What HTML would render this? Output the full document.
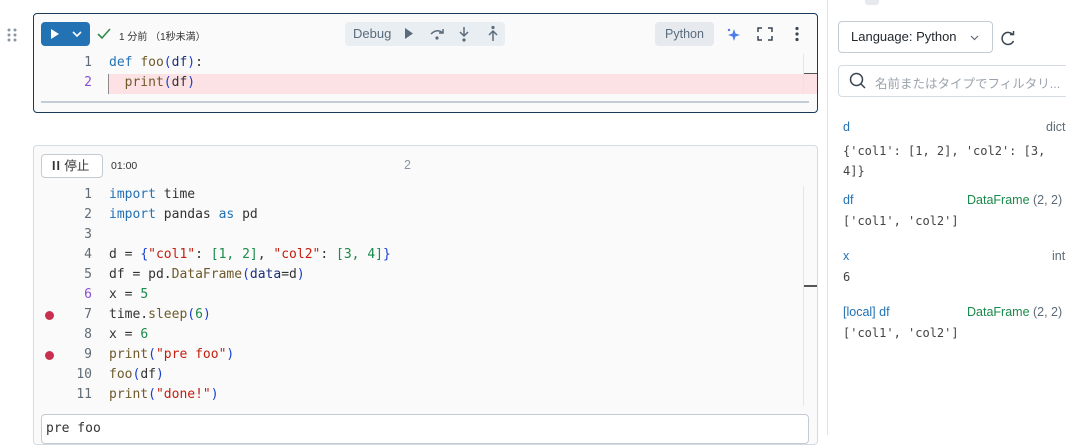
<!DOCTYPE html>
<html><head><meta charset="utf-8"><style>
*{box-sizing:border-box;margin:0;padding:0}
body{width:1066px;height:435px;overflow:hidden;background:#fff;font-family:"Liberation Sans","Noto Sans CJK JP",sans-serif;position:relative;color:#1f272d}
.a{position:absolute}
.mono{font-family:"DejaVu Sans Mono","Liberation Mono",monospace;font-size:13px}
.rm{font-family:"DejaVu Sans Mono","Liberation Mono",monospace;font-size:12px}
.ln{position:absolute;width:30px;text-align:right;left:62px;color:#5f6b76}
.cd{position:absolute;left:109px;white-space:pre;color:#333}
.k{color:#2272b4}.f{color:#6e5a2a}.b{color:#1a3fcf}.s{color:#c41d0f}.n{color:#1a8a4a}.v{color:#1b2f7a}
.dot{position:absolute;left:45px;width:9px;height:9px;border-radius:50%;background:#c9304f}
</style></head><body>
<svg class="a" style="left:7px;top:28px" width="12" height="14"><g fill="#8a96a3"><circle cx="2" cy="2" r="1.5"/><circle cx="8" cy="2" r="1.5"/><circle cx="2" cy="7" r="1.5"/><circle cx="8" cy="7" r="1.5"/><circle cx="2" cy="12" r="1.5"/><circle cx="8" cy="12" r="1.5"/></g></svg>

<div class="a" style="left:33px;top:13px;width:785px;height:100px;border:1px solid #1b3a57;border-radius:4px;background:#fafafa"></div>
<div class="a" style="left:41px;top:22px;width:49px;height:24px;background:#2272b4;border-radius:4px"></div>
<svg class="a" style="left:50px;top:29px" width="10" height="10"><path d="M1 0L9 5L1 10Z" fill="#fff"/></svg>
<svg class="a" style="left:72px;top:31px" width="10" height="6"><path d="M1 1L5 5L9 1" stroke="#fff" stroke-width="1.6" fill="none"/></svg>
<svg class="a" style="left:97px;top:28px" width="14" height="12"><path d="M1 6L5 10L13 1" stroke="#2e8b4a" stroke-width="1.6" fill="none"/></svg>
<div class="a" style="left:119px;top:28px;font-size:10px;color:#333">1 分前 （1秒未満）</div>
<div class="a" style="left:345px;top:22px;width:160px;height:24px;background:#e9eef3;border-radius:4px"></div>
<div class="a" style="left:353px;top:26px;font-size:13px;color:#5a6b7b">Debug</div>
<svg class="a" style="left:404px;top:28px" width="10" height="11"><path d="M1 0L9 5.5L1 11Z" fill="#5a6b7b"/></svg>
<svg class="a" style="left:429px;top:27px" width="16" height="14"><path d="M2 7Q8 1 14 6M14 2V6H10" stroke="#5a6b7b" stroke-width="1.5" fill="none"/><circle cx="8" cy="11" r="1.6" fill="#5a6b7b"/></svg>
<svg class="a" style="left:458px;top:26px" width="12" height="16"><path d="M6 1V10M2 6L6 10L10 6" stroke="#5a6b7b" stroke-width="1.5" fill="none"/><circle cx="6" cy="14" r="1.6" fill="#5a6b7b"/></svg>
<svg class="a" style="left:487px;top:25px" width="12" height="17"><path d="M6 7V16M2 10L6 6L10 10" stroke="#5a6b7b" stroke-width="1.5" fill="none"/><circle cx="6" cy="2.5" r="1.6" fill="#5a6b7b"/></svg>
<div class="a" style="left:655px;top:22px;width:59px;height:24px;background:#e6eaee;border-radius:4px;font-size:12.5px;color:#5a6b7b;text-align:center;line-height:24px">Python</div>
<svg class="a" style="left:726px;top:27px" width="14" height="14"><path d="M8 2L9.5 6.5L14 8L9.5 9.5L8 14L6.5 9.5L2 8L6.5 6.5Z" fill="#4c7de8"/><circle cx="3" cy="3" r="1.2" fill="#4c7de8"/></svg>
<svg class="a" style="left:757px;top:27px" width="16" height="14"><path d="M1 5V1H5M11 1H15V5M15 9V13H11M5 13H1V9" stroke="#3a4651" stroke-width="1.5" fill="none"/></svg>
<svg class="a" style="left:794px;top:26px" width="6" height="16"><g fill="#3a4651"><circle cx="3" cy="2.5" r="1.6"/><circle cx="3" cy="8" r="1.6"/><circle cx="3" cy="13.5" r="1.6"/></g></svg>
<div class="a" style="left:109px;top:74px;width:708px;height:20px;background:#fde2e5"></div>
<div class="a" style="left:108px;top:74px;width:1px;height:20px;background:#8a8a8a"></div>
<div class="a" style="left:803px;top:54px;width:1px;height:40px;background:#e5e5e5"></div>
<div class="a" style="left:804px;top:73px;width:13px;height:1px;background:#555"></div>
<div class="mono">
<div class="ln" style="top:55px">1</div><div class="cd" style="top:55px"><span class="k">def</span> <span class="f">foo</span><span class="b">(</span><span class="v">df</span><span class="b">)</span>:</div>
<div class="ln" style="top:75px;color:#8a4fd6">2</div><div class="cd" style="top:75px">  <span class="f">print</span><span class="b">(</span>df<span class="b">)</span></div>
</div>
<div class="a" style="left:41px;top:101px;width:768px;height:2px;background:#c3cbd5"></div>

<div class="a" style="left:33px;top:145px;width:785px;height:300px;border:1px solid #d4dbe3;border-radius:4px;background:#fafafa"></div>
<div class="a" style="left:41px;top:154px;width:62px;height:24px;border:1px solid #c3cbd5;border-radius:4px;background:#fff;font-size:12.5px;line-height:22px;padding-left:10px;color:#333"><b style="letter-spacing:1px">II</b> 停止</div>
<div class="a" style="left:111px;top:160px;font-size:10.5px;color:#333">01:00</div>
<div class="a" style="left:404px;top:158px;font-size:12.5px;color:#8a96a3">2</div>
<div class="a" style="left:803px;top:186px;width:1px;height:220px;background:#e5e5e5"></div>
<div class="a" style="left:804px;top:285px;width:13px;height:2px;background:#555"></div>
<div class="mono">
<div class="ln" style="top:187px">1</div><div class="cd" style="top:187px"><span class="k">import</span> time</div>
<div class="ln" style="top:207px">2</div><div class="cd" style="top:207px"><span class="k">import</span> pandas <span class="k">as</span> pd</div>
<div class="ln" style="top:227px">3</div>
<div class="ln" style="top:247px">4</div><div class="cd" style="top:247px">d = <span class="b">{</span><span class="s">"col1"</span>: <span class="n">[1, 2]</span>, <span class="s">"col2"</span>: <span class="n">[3, 4]</span><span class="b">}</span></div>
<div class="ln" style="top:267px">5</div><div class="cd" style="top:267px">df = pd.<span class="f">DataFrame</span><span class="b">(</span><span class="v">data</span>=d<span class="b">)</span></div>
<div class="ln" style="top:287px;color:#8a4fd6">6</div><div class="cd" style="top:287px">x = <span class="n">5</span></div>
<div class="dot" style="top:311px"></div>
<div class="ln" style="top:307px">7</div><div class="cd" style="top:307px">time.<span class="f">sleep</span><span class="b">(</span><span class="n">6</span><span class="b">)</span></div>
<div class="ln" style="top:327px">8</div><div class="cd" style="top:327px">x = <span class="n">6</span></div>
<div class="dot" style="top:351px"></div>
<div class="ln" style="top:347px">9</div><div class="cd" style="top:347px"><span class="f">print</span><span class="b">(</span><span class="s">"pre foo"</span><span class="b">)</span></div>
<div class="ln" style="top:367px">10</div><div class="cd" style="top:367px"><span class="f">foo</span><span class="b">(</span>df<span class="b">)</span></div>
<div class="ln" style="top:387px">11</div><div class="cd" style="top:387px"><span class="f">print</span><span class="b">(</span><span class="s">"done!"</span><span class="b">)</span></div>
</div>
<div class="a" style="left:41px;top:414px;width:768px;height:30px;border:1px solid #c3cbd5;border-radius:4px;background:#fff"></div>
<div class="a mono" style="left:46px;top:421px;color:#333">pre foo</div>

<div class="a" style="left:827px;top:0;width:1px;height:435px;background:#dde2e7"></div>
<div class="a" style="left:865px;top:0;width:14px;height:5px;background:#e6eaee;border-radius:0 0 3px 3px"></div>
<div class="a" style="left:838px;top:21px;width:155px;height:32px;border:1px solid #c3cbd5;border-radius:4px;font-size:13px;line-height:30px;padding-left:12px;color:#1f272d">Language: Python</div>
<svg class="a" style="left:970px;top:35px" width="9" height="6"><path d="M1 1L4.5 4.5L8 1" stroke="#5f6b76" stroke-width="1.2" fill="none"/></svg>
<svg class="a" style="left:1000px;top:30px" width="16" height="16"><path d="M13 5A6 6 0 1 0 13.5 11" stroke="#3a4651" stroke-width="1.5" fill="none"/><path d="M10 4.5H13.5V1" stroke="#3a4651" stroke-width="1.5" fill="none"/></svg>
<div class="a" style="left:838px;top:65px;width:240px;height:32px;border:1px solid #d4dbe3;border-radius:4px"></div>
<svg class="a" style="left:849px;top:72px" width="18" height="18"><circle cx="7.5" cy="7.5" r="6" stroke="#3a4651" stroke-width="1.5" fill="none"/><path d="M12 12L16 16" stroke="#3a4651" stroke-width="1.5"/></svg>
<div class="a" style="left:875px;top:73px;font-size:12.5px;color:#9aa3ad">名前またはタイプでフィルタリ...</div>
<div style="font-size:12.5px">
<div class="a" style="left:843px;top:120px;color:#2272b4">d</div><div class="a" style="left:1046px;top:120px;color:#5f6b76">dict</div>
<div class="a rm" style="left:843px;top:141px;color:#444;line-height:20px;width:215px">{'col1': [1, 2], 'col2': [3,<br>4]}</div>
<div class="a" style="left:843px;top:193px;color:#2272b4">df</div><div class="a" style="left:967px;top:193px;color:#1a8a4a">DataFrame <span style="color:#5f6b76">(2, 2)</span></div>
<div class="a rm" style="left:843px;top:214px;color:#444">['col1', 'col2']</div>
<div class="a" style="left:843px;top:249px;color:#2272b4">x</div><div class="a" style="left:1052px;top:249px;color:#5f6b76">int</div>
<div class="a rm" style="left:843px;top:270px;color:#444">6</div>
<div class="a" style="left:843px;top:305px;color:#2272b4">[local] df</div><div class="a" style="left:967px;top:305px;color:#1a8a4a">DataFrame <span style="color:#5f6b76">(2, 2)</span></div>
<div class="a rm" style="left:843px;top:326px;color:#444">['col1', 'col2']</div>
</div>
</body></html>
